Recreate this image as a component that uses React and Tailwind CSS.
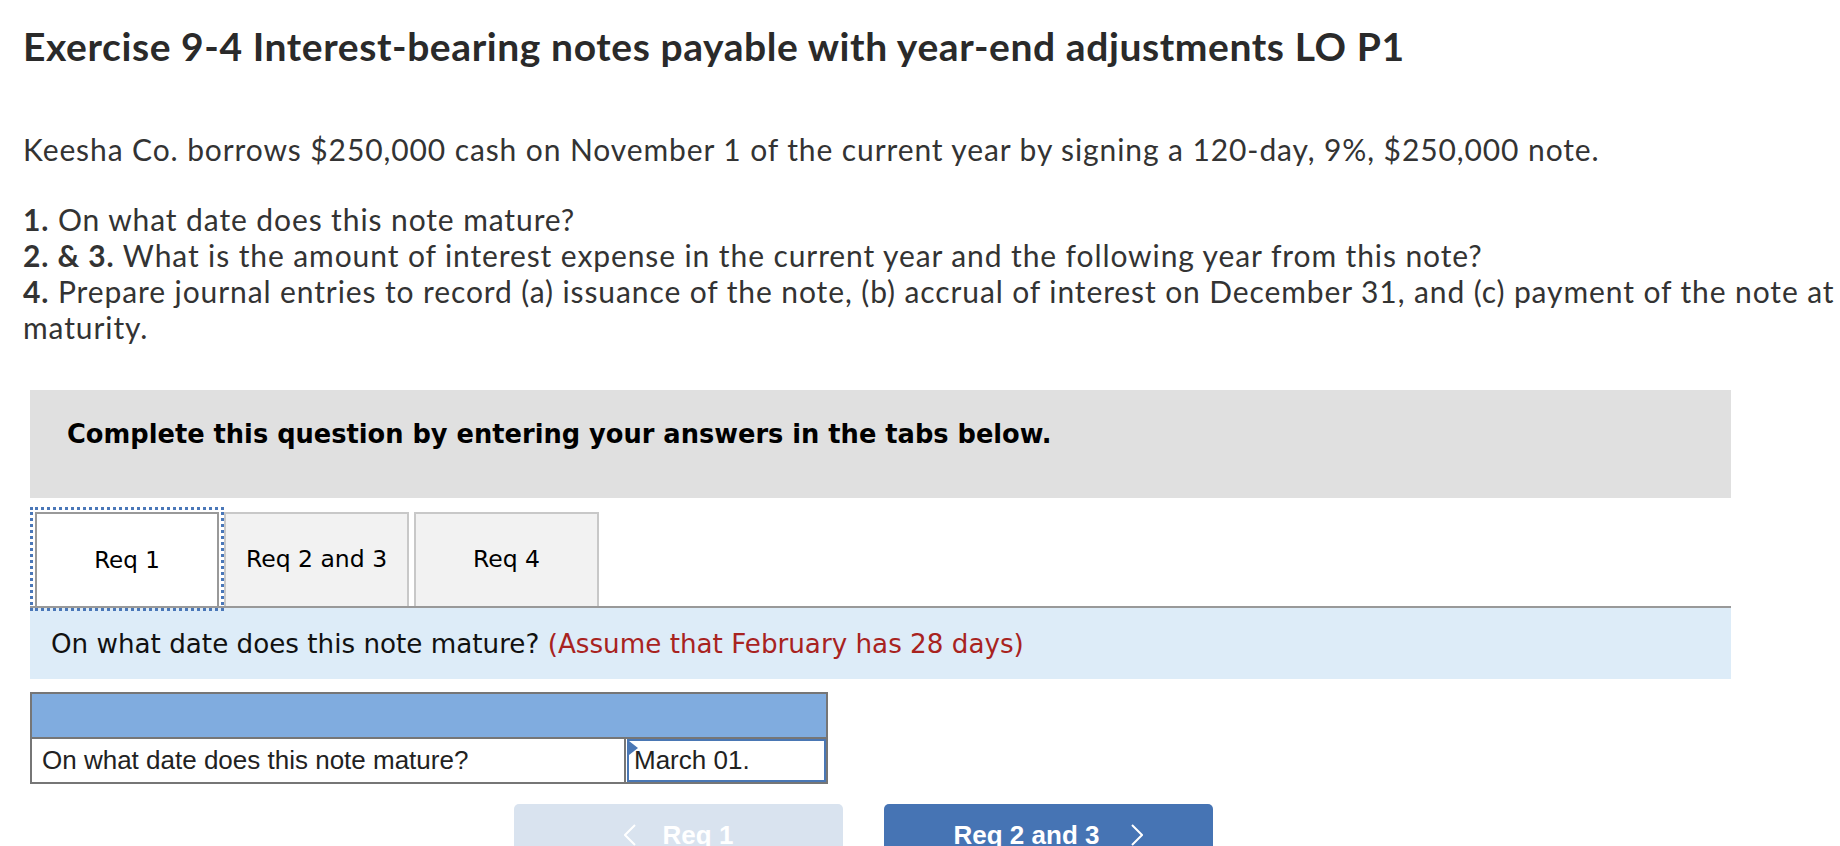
import React from 'react';

const proxima = { fontFamily: 'Lato, "Open Sans", sans-serif' };
const verdana = { fontFamily: '"DejaVu Sans", Verdana, sans-serif' };
const arial = { fontFamily: '"Liberation Sans", Arial, sans-serif' };

const tabs = ['Req 1', 'Req 2 and 3', 'Req 4'];

const ChevronLeft = () => (
  <svg width="12" height="22" viewBox="0 0 12 22" fill="none" stroke="white" strokeWidth="2">
    <polyline points="11,1 1,11 11,21" />
  </svg>
);

const ChevronRight = () => (
  <svg width="12" height="22" viewBox="0 0 12 22" fill="none" stroke="white" strokeWidth="2">
    <polyline points="1,1 11,11 1,21" />
  </svg>
);

const App = () => {
  return (
    <div className="min-h-screen bg-white overflow-hidden">
      <div className="pl-[23px] pr-[4px]">
        <h1 className="pt-[22px] text-[39px] leading-[48px] font-bold tracking-[0.015em] text-[#2a2a2a]" style={proxima}>
          Exercise 9-4 Interest-bearing notes payable with year-end adjustments LO P1
        </h1>

        <div className="mt-[61px] text-[30px] leading-[36px] tracking-[0.03em] text-[#333333]" style={proxima}>
          <p className="whitespace-nowrap">Keesha Co. borrows $250,000 cash on November 1 of the current year by signing a 120-day, 9%, $250,000 note.</p>
          <div className="mt-[34px]">
            <p className="whitespace-nowrap"><span className="font-bold">1.</span> On what date does this note mature?</p>
            <p className="whitespace-nowrap"><span className="font-bold">2. &amp; 3.</span> What is the amount of interest expense in the current year and the following year from this note?</p>
            <p className="whitespace-nowrap">
              <span className="font-bold">4.</span> Prepare journal entries to record (a) issuance of the note, (b) accrual of interest on December 31, and (c) payment of the note at
              <br />
              maturity.
            </p>
          </div>
        </div>

        <div className="ml-[7px] mt-[45px] w-[1701px]">
          <div className="h-[108px] bg-[#e0e0e0] pl-[37px] pt-[28px]">
            <p className="text-[25.7px] leading-[32px] font-bold text-black" style={verdana}>
              Complete this question by entering your answers in the tabs below.
            </p>
          </div>

          <div className="mt-[14px] flex gap-[5px] border-b-2 border-[#999999] pl-[5px]">
            {tabs.map((t, i) => (
              <div
                key={t}
                className={
                  i === 0
                    ? 'flex h-[94px] w-[184px] items-center justify-center border-2 border-b-0 border-[#999999] bg-white text-[23px] text-black outline-[3px] outline-dotted outline-offset-[2px] outline-[#4a77b8]'
                    : 'flex h-[94px] w-[185px] items-center justify-center border-2 border-b-0 border-[#c8c8c8] bg-[#f2f2f2] text-[23.5px] text-black'
                }
                style={verdana}
              >
                {t}
              </div>
            ))}
          </div>

          <div className="h-[71px] bg-[#ddecf8] pl-[21px] pt-[20px]">
            <p className="text-[26.2px] leading-[32px] text-[#111111]" style={verdana}>
              On what date does this note mature? <span className="text-[#a8231f]">(Assume that February has 28 days)</span>
            </p>
          </div>

          <div className="mt-[13px] w-[798px] border-2 border-[#767676]" style={arial}>
            <div className="h-[45px] border-b-2 border-[#767676] bg-[#80acdf]" />
            <div className="flex h-[43px]">
              <div className="flex w-[594px] items-center border-r-2 border-[#767676] pl-[10px] text-[26px] text-[#222222]">
                On what date does this note mature?
              </div>
              <div className="relative flex flex-1 items-center border-2 border-[#4a77b4] ml-px pl-[5px] text-[26px] text-[#222222]">
                <svg className="absolute left-0 top-0" width="9" height="14" viewBox="0 0 9 14">
                  <polygon points="0,0 9,7 0,14" fill="#4a77b4" />
                </svg>
                March 01.
              </div>
            </div>
          </div>

          <div className="mt-[20px] ml-[484px] flex gap-[41px]" style={arial}>
            <div className="flex h-[62px] w-[329px] items-center justify-center gap-[27px] rounded-[5px] bg-[#d9e3ef] text-[26px] font-bold text-white">
              <ChevronLeft />
              <span>Req 1</span>
            </div>
            <div className="flex h-[62px] w-[329px] items-center justify-center gap-[32px] rounded-[5px] bg-[#4674b4] text-[26px] font-bold text-white">
              <span>Req 2 and 3</span>
              <ChevronRight />
            </div>
          </div>
        </div>
      </div>
    </div>
  );
};

export default App;
